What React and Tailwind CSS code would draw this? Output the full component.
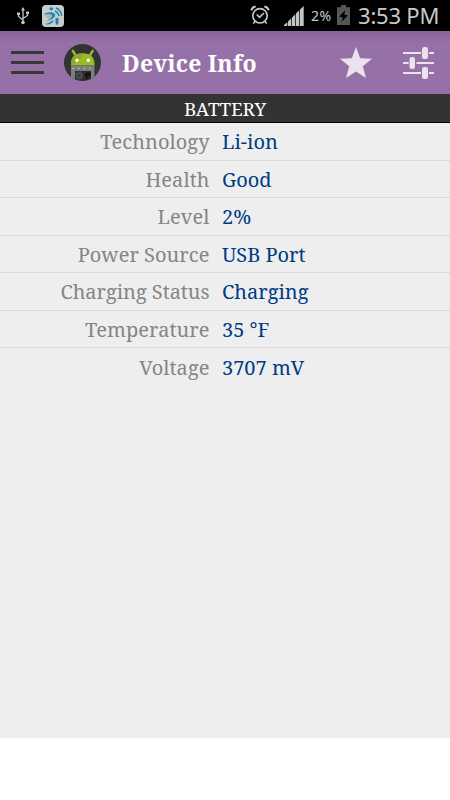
import clsx from 'clsx';

const rows = [
  { label: 'Technology', value: 'Li-ion' },
  { label: 'Health', value: 'Good' },
  { label: 'Level', value: '2%' },
  { label: 'Power Source', value: 'USB Port' },
  { label: 'Charging Status', value: 'Charging', labelClass: 'tracking-[-0.04px]' },
  { label: 'Temperature', value: '35 °F' },
  { label: 'Voltage', value: '3707 mV' },
];

const UsbIcon = () => (
  <svg className="w-3.5 h-[18px]" viewBox="0 0 14 18" fill="none" stroke="#c4c4c4" strokeWidth="1.3">
    <path d="M7 2V16M2.5 7V9.5L7 13M11.5 6V8.5L7 11.5" />
    <path d="M7 0L9 3.5H5ZM1 5.5H4V8H1ZM10 4.5H13V7H10Z" fill="#c4c4c4" stroke="none" />
    <circle cx="7" cy="15.5" r="1.8" fill="#c4c4c4" stroke="none" />
  </svg>
);

const AppIcon = () => (
  <svg className="w-[22px] h-[22px]" viewBox="0 0 22 22">
    <rect width="22" height="22" rx="4" fill="#c9cccd" />
    <path d="M3 10C7 8 10 9 12 10L8 13.5C5 14 4 12 3 10Z" fill="#acb6ba" />
    <g fill="#1b87b4">
      <ellipse cx="9.3" cy="3.8" rx="1.9" ry="1.6" />
      <path d="M1.5 9.5C5 6.5 11 6.5 13 9C14 12 10 15 3.5 16.5C8 14.5 11 11.5 10 10C8 8.5 4 9 1.5 9.5Z" />
      <path d="M3 19C6 20.5 10 19 12 15.5L10 15.8C8 17.5 6 18.3 3 19ZM13.5 13H16.5V18L15 20.5L13.5 18Z" />
    </g>
    <path d="M14 3Q19 5 19.7 11M13 6Q16.3 7.5 17 11" fill="none" stroke="#1b87b4" strokeWidth="1.4" />
  </svg>
);

const AlarmIcon = () => (
  <svg className="w-5 h-5" viewBox="0 0 20 20" fill="none" stroke="#cacaca" strokeWidth="1.6">
    <circle cx="10" cy="10.8" r="7.2" />
    <path d="M6.7 9.5L9.5 12.3L14 8M5 16.3L3.4 18.6M15 16.3L16.6 18.6" />
    <path d="M1.4 5.2Q2 2.1 5.6 1.4M14.4 1.4Q18 2.1 18.6 5.2" strokeWidth="2" />
  </svg>
);

const SignalIcon = () => (
  <svg className="w-5 h-5" viewBox="0 0 20 20" fill="#c4c4c4">
    <path d="M0 20V19L3.3 16.2V20ZM4 20V15.5L7.3 12.2V20ZM8 20V11.5L11.3 8.2V20ZM12 20V7.5L15.3 4.2V20ZM16 20V3.5L19.7 0V20Z" />
  </svg>
);

const BatteryIcon = () => (
  <svg className="w-[13px] h-5" viewBox="0 0 13 20">
    <path d="M4 0H9V2.2H13V20H0V2.2H4Z" fill="#565656" />
    <path d="M8.4 5L2.2 11.5L6 12.5L4.2 17L10.9 10.5L7.2 9.5Z" fill="#000" />
  </svg>
);

const DroidLogo = () => (
  <svg className="w-[37px] h-[37px]" viewBox="0 0 37 37">
    <defs>
      <clipPath id="disc"><circle cx="18.5" cy="18.5" r="18.5" /></clipPath>
    </defs>
    <g clipPath="url(#disc)">
      <rect width="37" height="37" fill="#333" />
      <path d="M12 12L8.8 6.8M25.5 12L28.7 6.8" stroke="#9abb25" strokeWidth="2.4" strokeLinecap="round" />
      <path d="M7 21.5V20C7 13 11 9.2 18.7 9.2S30.5 13 30.5 20V21.5Z" fill="#9abb25" />
      <path d="M7 21.5V20C7 13 11 9.2 18.7 9.2C18 14 14 18 7 20.5Z" fill="#8caa24" />
      <circle cx="13" cy="16.3" r="1.7" fill="#fff" />
      <circle cx="24.3" cy="16.3" r="1.7" fill="#fff" />
      <rect x="7" y="21.5" width="23.5" height="16" fill="#7e7e7e" />
      <rect x="11" y="27" width="16" height="11" fill="#2b2b2b" />
      <path d="M8.5 24.3H30" stroke="#c4c4c4" strokeWidth="1.2" strokeDasharray="1.4 4.2" />
      <circle cx="15.3" cy="31.5" r="4.5" fill="#383838" />
      <circle cx="15.3" cy="31.5" r="2.6" fill="none" stroke="#666" strokeWidth="0.9" />
      <path d="M20.5 30.5L23 28.5H27V31L23 34.5V37Z" fill="#141414" />
    </g>
  </svg>
);

const StarIcon = () => (
  <svg className="w-8 h-[31px]" viewBox="0 0 32 31">
    <path d="M16 0L20.2 11.2L32 11.8L22.8 19.2L26 31L16 24.4L6 31L9.2 19.2L0 11.8L11.8 11.2Z" fill="#ebe2ee" />
  </svg>
);

const SlidersIcon = () => (
  <svg className="w-[31px] h-8" viewBox="0 0 31 32" fill="#ebe2ee">
    <path d="M0 5H18V7H0ZM26 5H31V7H26ZM0 15H5.5V17H0ZM13.5 15H31V17H13.5ZM0 25H18V27H0ZM26 25H31V27H26Z" />
    <rect x="19" y="0" width="6" height="12" rx="2.3" />
    <rect x="6.5" y="10" width="5.5" height="12" rx="2.3" />
    <rect x="19" y="20" width="6" height="12" rx="2.3" />
  </svg>
);

const StatusBar = () => (
  <div className="flex h-[31px] items-start bg-black text-[#c8c8c8] font-['Noto_Sans',sans-serif]">
    <div className="pl-4 pt-[7px]"><UsbIcon /></div>
    <div className="pl-3 pt-[5px]"><AppIcon /></div>
    <div className="ml-auto flex items-start">
      <div className="pt-[5px]"><AlarmIcon /></div>
      <div className="pl-[14px] pt-[6px]"><SignalIcon /></div>
      <span className="ml-[7px] mt-[6px] w-[22px] whitespace-nowrap text-[14px] leading-5 tracking-[0.5px]">2%</span>
      <div className="pl-1 pt-[5px]"><BatteryIcon /></div>
      <span className="ml-2 w-[92px] whitespace-nowrap text-[22px] leading-[30px] tracking-[-0.2px]">3:53 PM</span>
    </div>
  </div>
);

const Header = () => (
  <header className="flex h-[63px] items-center bg-linear-to-b from-[#89639a] to-[#9671a8] to-20% text-white">
    <button className="ml-[11px] flex w-[33px] flex-col gap-[7px]" aria-label="Menu">
      <span className="h-[3px] w-full bg-[#383838]" />
      <span className="h-[3px] w-full bg-[#383838]" />
      <span className="h-[3px] w-full bg-[#383838]" />
    </button>
    <div className="ml-5"><DroidLogo /></div>
    <h1 className="ml-[21px] w-[137px] whitespace-nowrap text-[23px] font-bold leading-8 tracking-[0.25px]">Device Info</h1>
    <div className="ml-[81px]"><StarIcon /></div>
    <div className="ml-[31px]"><SlidersIcon /></div>
  </header>
);

const InfoRow = ({ label, value, labelClass, last }) => (
  <div className={clsx('flex h-[37.5px] items-center pt-0.5 text-[20px] leading-7', !last && 'border-b border-[#dadada]')}>
    <span className={clsx('w-[209.5px] whitespace-nowrap text-right text-[#858585]', labelClass ?? 'tracking-[0.05px]')}>{label}</span>
    <span className="ml-[12.5px] whitespace-nowrap text-[#003b85]">{value}</span>
  </div>
);

export default function App() {
  return (
    <div className="flex h-[800px] w-[450px] flex-col overflow-hidden bg-white font-['Noto_Serif','Droid_Serif','DejaVu_Serif_Condensed','DejaVu_Serif',serif]">
      <StatusBar />
      <Header />
      <div className="flex h-[29px] items-center justify-center border-b border-black bg-[#333] pt-px text-[18.8px] leading-7 text-white">
        BATTERY
      </div>
      <main className="h-[614.5px] bg-[#eee]">
        {rows.map((row, i) => (
          <InfoRow key={row.label} {...row} last={i === rows.length - 1} />
        ))}
      </main>
    </div>
  );
}
